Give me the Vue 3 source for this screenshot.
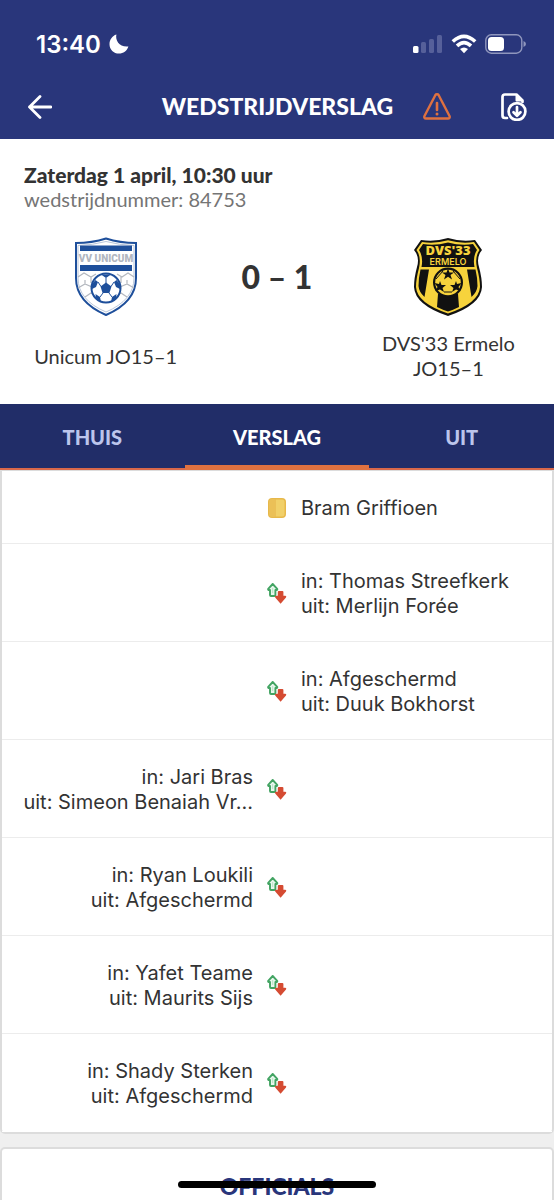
<template>
  <div class="screen">
    <header class="app-header">
      <div class="status-bar">
        <div class="status-time">
          <span>13:40</span>
          <svg class="moon" viewBox="0 0 20 20" aria-hidden="true">
            <path d="M7.4.6C6 6.7 10.600 13.500 19.400 12.500C18 17 14.300 19.600 10 19.600C4.700 19.600.5 15.500.5 10.200C.5 5.800 3.300 1.900 7.400.6Z" fill="#fff" />
          </svg>
        </div>
        <div class="status-icons">
          <svg class="signal" viewBox="0 0 30 20" aria-hidden="true">
            <rect x="0" y="12" width="5.500" height="7" rx="1.500" fill="#fff" />
            <rect x="8" y="8" width="5" height="11" rx="1.500" fill="#56609a" />
            <rect x="16" y="5" width="5" height="14" rx="1.500" fill="#56609a" />
            <rect x="24" y="1" width="5" height="18" rx="1.500" fill="#56609a" />
          </svg>
          <svg class="wifi" viewBox="0 0 26 20" aria-hidden="true">
            <g fill="none" stroke="#fff" stroke-width="3.600">
              <path d="M1.800 7.500Q13-2.900 24.200 7.500" />
              <path d="M6 11.900Q13 5.300 20 11.900" />
            </g>
            <path d="M9 15.100Q13 11.900 17 15.100L13 19.200Z" fill="#fff" />
          </svg>
          <svg class="battery" viewBox="0 0 41 20" aria-hidden="true">
            <rect x=".8" y=".8" width="36" height="18.400" rx="5.500" fill="none" stroke="#8f96bd" stroke-width="1.400" />
            <rect x="3" y="3" width="16" height="14" rx="3.500" fill="#fff" />
            <path d="M38.500 7Q41 8 41 10T38.500 13Z" fill="#8f96bd" />
          </svg>
        </div>
      </div>

      <div class="title-bar">
        <button class="icon-button" type="button" aria-label="Terug">
          <svg class="back-icon" viewBox="0 0 24 24" aria-hidden="true">
            <path d="M23 12H1.500M12 1.500L1.500 12L12 22.500" fill="none" stroke="#fff" stroke-width="2.800" stroke-linecap="round" stroke-linejoin="round" />
          </svg>
        </button>
        <h1 class="title">WEDSTRIJDVERSLAG</h1>
        <div class="actions">
          <button class="icon-button" type="button" aria-label="Melding">
            <svg class="warning-icon" viewBox="0 0 28 27" aria-hidden="true">
              <g fill="none" stroke="#df7140" stroke-linecap="round" stroke-linejoin="round">
                <path d="M12.300 2.200L1.500 23C.9 24.400 1.600 25.500 3 25.500H25C26.400 25.500 27.100 24.400 26.500 23L15.700 2.200C15 1 13 1 12.300 2.200Z" stroke-width="2.400" />
                <path d="M14 10V17" stroke-width="2.600" />
              </g>
              <circle cx="14" cy="20.900" r="1.500" fill="#df7140" />
            </svg>
          </button>
          <button class="icon-button" type="button" aria-label="Downloaden">
            <svg class="download-icon" viewBox="0 0 26 28" aria-hidden="true">
              <g fill="none" stroke="#fff" stroke-width="2.700" stroke-linecap="round" stroke-linejoin="round">
                <path d="M6 25H4Q1.500 25 1.500 22.500V4Q1.500 1.500 4 1.500H15.500L21.500 7.500V9" />
                <path d="M15.500 2V7.500H21Z" fill="#fff" stroke-width="2" />
                <circle cx="16" cy="18.500" r="8.400" />
                <path d="M16 14V22.500M12.500 19.300L16 22.700L19.500 19.300" />
              </g>
            </svg>
          </button>
        </div>
      </div>
    </header>

    <section class="match">
      <p class="match-date">Zaterdag 1 april, 10:30 uur</p>
      <p class="match-number">wedstrijdnummer: 84753</p>
      <div class="scoreboard">
        <div class="team">
          <svg class="team-logo" viewBox="0 0 70 80" aria-hidden="true">
            <path d="M5 6Q21 6 35 1.500Q49 6 65 6V41Q65 65 35 78Q5 65 5 41Z" fill="#fff" stroke="#1e4f9b" stroke-width="2" />
            <path d="M7 8.500Q22 8 35 4.500Q48 8 63 8.500V41Q63 63 35 75Q7 63 7 41Z" fill="none" stroke="#b9c6da" stroke-width="1" />
            <path d="M9 8.500H61V14H9ZM9 28H61V34H9Z" fill="#1e4f9b" />
            <text x="35" y="25" text-anchor="middle" class="unicum-text">VV UNICUM</text>
            <path d="M7 40L13 36L20 40L25 37M7 51L14 47L21 50M14 60L20 56L24 58M46 37L51 40L57 36L63 40M63 51L56 47L49 50M56 60L50 56L46 58M20 40V46M50 40V46M14 47V43M56 47V43" fill="none" stroke="#b4b8bf" stroke-width="1.200" />
            <circle cx="35" cy="51" r="14.500" fill="#fff" stroke="#1e4f9b" stroke-width="2" />
            <path d="M35 45.500L40.500 49.500L38.400 56H31.600L29.500 49.500Z" fill="#1e4f9b" />
            <path d="M30 37.500H40L35 41ZM21 47L24.500 43L27 45L25 50L21 52ZM49 47L45.500 43L43 45L45 50L49 52ZM24.500 57L29 60L30 65L25 62ZM45.500 57L41 60L40 65L45 62Z" fill="#1e4f9b" />
            <path d="M35 41V46M27 45L30 49.500M43 45L40 49.500M29 60L32 56M41 60L38 56" stroke="#1e4f9b" stroke-width="1" />
          </svg>
          <div class="team-name">Unicum JO15–1</div>
        </div>
        <div class="score">0 – 1</div>
        <div class="team">
          <svg class="team-logo" viewBox="0 0 70 80" aria-hidden="true">
            <path d="M8 3Q22 5 35 1Q48 5 62 3L69 13Q63 20 66 30Q69 41 69 50Q68 68 35 79Q2 68 1 50Q1 41 4 30Q7 20 1 13Z" fill="#111" />
            <path d="M9 5Q22 7 35 3.200Q48 7 61 5L66.500 13Q61.500 20 64 31Q67 42 67 50Q66 66 35 76.500Q4 66 3 50Q3 42 6 31Q8.500 20 3.500 13Z" fill="#f7d33c" />
            <path d="M10 7Q22 9 35 5.500Q48 9 60 7L64 13Q59.500 20 61.500 30H8.500Q10.500 20 6 13Z" fill="#111" />
            <path d="M7.500 32.500H16L11.500 60Q6 55 5.500 49Q5.500 41 7.500 32.500ZM62.500 32.500H54L58.500 60Q64 55 64.500 49Q64.500 41 62.500 32.500ZM25 57H45L46 70Q40 73 35 74.500Q30 73 24 70Z" fill="#111" />
            <circle cx="35" cy="45.500" r="15" fill="#111" />
            <circle cx="35" cy="45.500" r="12.800" fill="#f7d33c" />
            <path d="M35 31.500L36.500 35.500H41L37.500 38L39 42.500L35 39.800L31 42.500L32.500 38L29 35.500H33.500Z" fill="#111" />
            <path d="M27 44L28.500 48H33L29.500 51L31 55L27 52.500L22.500 54L24.500 50L21.500 46L26 47ZM43 44L41.500 48H37L40.500 51L39 55L43 52.500L47.500 54L45.500 50L48.500 46L44 47Z" fill="#111" />
            <path d="M30 34L23 42M40 34L47 42M31 55H39" stroke="#111" stroke-width="1" />
            <text x="35" y="18" text-anchor="middle" class="dvs-text">DVS'33</text>
            <text x="35" y="28" text-anchor="middle" class="ermelo-text">ERMELO</text>
          </svg>
          <div class="team-name">DVS'33 Ermelo<br />JO15–1</div>
        </div>
      </div>
    </section>

    <nav class="tabs">
      <button
        v-for="tab in tabs"
        :key="tab"
        type="button"
        class="tab"
        :class="{ active: tab === activeTab }"
        @click="activeTab = tab"
      >
        {{ tab }}
      </button>
    </nav>

    <main>
      <ul class="card events">
        <li v-for="(event, index) in events" :key="index" class="event" :class="event.side">
          <div class="event-text">
            <div v-for="line in event.lines" :key="line">{{ line }}</div>
          </div>
          <svg v-if="event.type === 'card'" class="event-icon" viewBox="0 0 20 22" aria-hidden="true">
            <rect x="1" y="0" width="18" height="20" rx="4" fill="#e7b84a" />
            <rect x="2" y="1" width="8" height="18" rx="3" fill="#ebc057" />
            <path d="M9 1.500H15Q17.500 1.500 17.500 4V16Q17.500 18.500 15 18.500H9Z" fill="#f1d069" />
          </svg>
          <svg v-else class="event-icon" viewBox="0 0 20 22" aria-hidden="true">
            <path d="M5.700 1L10.200 5.800Q10.700 7.300 8.400 7V12Q8.400 13 7.400 13H4Q3 13 3 12V7Q.7 7.300 1.200 5.800Z" fill="#e9f7ee" stroke="#43a463" stroke-width="1.900" stroke-linejoin="round" />
            <path d="M5.700 5V10" stroke="#b9e2c6" stroke-width="1" />
            <path d="M10.800 9Q10.800 8 11.800 8H15.400Q16.400 8 16.400 9V12.700H18.300Q19.900 13 19 14.500L13.600 20.700L8.200 14.500Q7.300 13 8.900 12.700H10.800Z" fill="#d54b32" />
          </svg>
        </li>
      </ul>

      <section class="card officials">
        <h2>OFFICIALS</h2>
      </section>
    </main>

    <div class="home-indicator"></div>
  </div>
</template>

<script setup>
import { ref } from 'vue'

const tabs = ['THUIS', 'VERSLAG', 'UIT']
const activeTab = ref('VERSLAG')

const events = [
  { side: 'away', type: 'card', lines: ['Bram Griffioen'] },
  { side: 'away', type: 'swap', lines: ['in: Thomas Streefkerk', 'uit: Merlijn Forée'] },
  { side: 'away', type: 'swap', lines: ['in: Afgeschermd', 'uit: Duuk Bokhorst'] },
  { side: 'home', type: 'swap', lines: ['in: Jari Bras', 'uit: Simeon Benaiah Vr...'] },
  { side: 'home', type: 'swap', lines: ['in: Ryan Loukili', 'uit: Afgeschermd'] },
  { side: 'home', type: 'swap', lines: ['in: Yafet Teame', 'uit: Maurits Sijs'] },
  { side: 'home', type: 'swap', lines: ['in: Shady Sterken', 'uit: Afgeschermd'] },
]
</script>

<style>
body {
  margin: 0;
  background: #efefef;
}
</style>

<style scoped>
.screen {
  height: 100vh;
  overflow: hidden;
  background: #efefef;
  color: #333;
  font-family: Lato, sans-serif;
  font-size: 20px;
  line-height: 25px;
}

.screen * {
  box-sizing: border-box;
}

svg {
  display: block;
}

button {
  margin: 0;
  padding: 0;
  border: 0;
  background: none;
  font: inherit;
}

.app-header {
  padding-top: 24px;
  background: #29367b;
  color: #fff;
}

.status-bar {
  display: flex;
  align-items: center;
  justify-content: space-between;
  height: 40px;
  padding: 0 28px 0 36px;
}

.status-time {
  display: flex;
  align-items: center;
  gap: 8px;
  font-family: Inter, sans-serif;
  font-size: 24px;
  font-weight: 600;
}

.moon {
  width: 20px;
  height: 20px;
}

.status-icons {
  display: flex;
  align-items: center;
  gap: 8px;
}

.signal {
  width: 30px;
  height: 20px;
}

.wifi {
  width: 26px;
  height: 20px;
}

.battery {
  width: 41px;
  height: 20px;
}

.title-bar {
  display: grid;
  grid-template-columns: 1fr auto 1fr;
  align-items: center;
  height: 75px;
  padding: 10px 27px 0 28px;
}

.title {
  margin: 0;
  font-size: 23px;
  font-weight: 900;
}

.actions {
  display: flex;
  align-items: center;
  justify-content: flex-end;
  gap: 50px;
}

.back-icon {
  width: 24px;
  height: 24px;
}

.warning-icon {
  width: 28px;
  height: 27px;
}

.download-icon {
  width: 26px;
  height: 28px;
}

.match {
  padding: 23px 20px;
  background: #fff;
}

.match p {
  margin: 0 4px;
}

.match-date {
  font-size: 21px;
  font-weight: 900;
}

.match-number {
  color: #757575;
}

.scoreboard {
  display: grid;
  grid-template-columns: 1fr 1fr 1fr;
  margin-top: 25px;
}

.team {
  display: flex;
  flex-direction: column;
  align-items: center;
  gap: 14px;
  text-align: center;
}

.team-logo {
  width: 70px;
  height: 80px;
}

.team-name {
  display: flex;
  align-items: center;
  min-height: 50px;
}

.score {
  height: 80px;
  font-size: 32px;
  font-weight: 900;
  line-height: 80px;
  text-align: center;
}

.unicum-text {
  font: 900 10px Roboto, sans-serif;
  fill: #b1b6bf;
}

.dvs-text {
  font: 800 13px "Open Sans", sans-serif;
  fill: #f7d33c;
}

.ermelo-text {
  font: 600 9px Inter, sans-serif;
  fill: #f7d33c;
}

.tabs {
  display: grid;
  grid-template-columns: 1fr 1fr 1fr;
  height: 66px;
  background: #212d68;
}

.tab {
  padding-top: 2px;
  border-bottom: 2px solid #d9684a;
  color: #bcc5ec;
  font-weight: 900;
  cursor: pointer;
}

.tab.active {
  padding-top: 5px;
  border-bottom: 5px solid #df7140;
  color: #fff;
}

.card {
  margin: 0;
  border: 2px solid #dcdcdc;
  border-radius: 5px;
  background: #fff;
}

.events {
  padding: 0;
  border-top-width: 1px;
  border-radius: 0 0 5px 5px;
  list-style: none;
  font-family: Inter, sans-serif;
}

.event {
  display: grid;
  grid-template-columns: 1fr 20px 1fr;
  column-gap: 14px;
  align-items: center;
  padding: 25px 12px 22px;
  border-bottom: 1px solid #ececec;
}

.event:last-child {
  border-bottom-color: #fff;
}

.event-text {
  grid-row: 1;
  white-space: nowrap;
}

.home .event-text {
  grid-column: 1;
  text-align: right;
}

.away .event-text {
  grid-column: 3;
}

.event-icon {
  grid-row: 1;
  grid-column: 2;
  width: 20px;
  height: 22px;
}

.officials {
  margin-top: 13px;
  padding: 25px 20px;
  text-align: center;
}

.officials h2 {
  margin: 0;
  color: #29367b;
  font-size: 23px;
  font-weight: 900;
}

.home-indicator {
  position: fixed;
  bottom: 12px;
  left: 50%;
  width: 198px;
  height: 7px;
  border-radius: 4px;
  background: #000;
  transform: translateX(-50%);
}
</style>
